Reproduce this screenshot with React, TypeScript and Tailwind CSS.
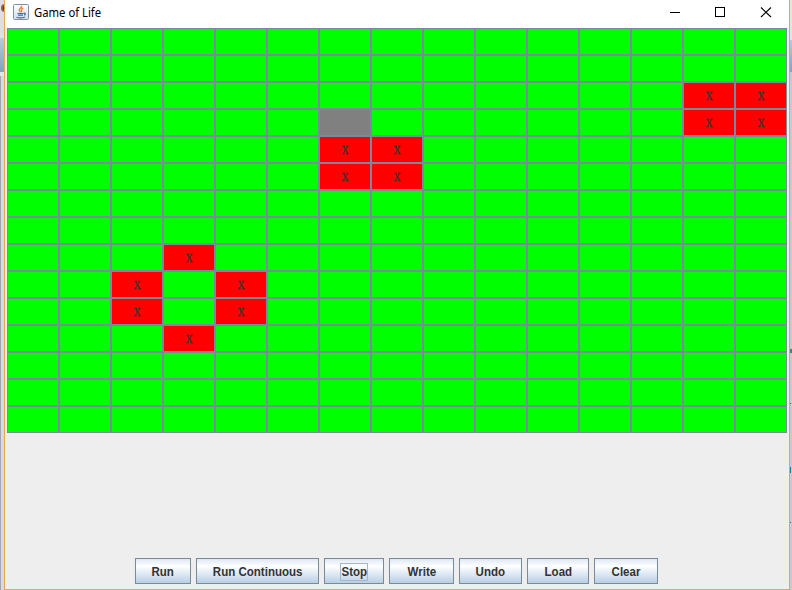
import React from "react";

const COLS = 15;
const ROWS = 15;
const live = new Set(["2-13", "2-14", "3-13", "3-14", "4-6", "4-7", "5-6", "5-7", "8-3", "9-2", "9-4", "10-2", "10-4", "11-3"]);

function Cell({ id }: { id: string }) {
  if (id === "3-6") return <div className="border border-[#7a8a99] bg-[#808080]" />;
  if (!live.has(id)) return <div className="border border-[#7a8a99] bg-[#00ff00]" />;
  return (
    <div className="flex items-center justify-center border border-[#7a8a99] bg-[#ff0000] pt-0.5 text-[11px] leading-none text-[#333333] [font-family:'DejaVu_Serif',serif]">
      <span className="scale-x-[.84] [-webkit-text-stroke:0.3px_#333333]">X</span>
    </div>
  );
}

const buttons = [
  { label: "Run", width: "w-14" },
  { label: "Run Continuous", width: "w-[123px]" },
  { label: "Stop", width: "w-[60px]", focused: true },
  { label: "Write", width: "w-[65px]" },
  { label: "Undo", width: "w-[63px]" },
  { label: "Load", width: "w-[62px]" },
  { label: "Clear", width: "w-16" },
];

function JavaIcon() {
  return (
    <svg width="16" height="16" viewBox="0 0 16 16" fill="none">
      <defs>
        <linearGradient id="tile" x1="0" y1="0" x2="0" y2="1">
          <stop stopColor="#ffffff" />
          <stop offset="1" stopColor="#d3dce5" />
        </linearGradient>
      </defs>
      <rect x=".5" y=".5" width="15" height="15" rx="1" fill="url(#tile)" stroke="#7893a8" />
      <path d="M8.800 1.800C9 4 5.800 4.200 6.200 6.200c.2.800 1 1.200 1.200 2M10.300 4.200C8.500 5 8 5.800 8.700 6.700c.4.600 0 1-.4 1.500" stroke="#ef8235" strokeWidth="1.400" />
      <path d="M4.500 9.500h6M5 11.200h5M3.500 13.300c2.500.800 6 .700 8.500-.300M10.800 9.200c2.200-.500 2 1.500.200 2" stroke="#466d8d" strokeWidth="1.200" />
    </svg>
  );
}

export default function App() {
  return (
    <div className="flex h-[590px] w-[792px] overflow-hidden bg-[#eeeeee] [font-family:'Liberation_Sans',Arial,sans-serif]">
      <div className="flex w-1 shrink-0 flex-col bg-[#dfdfe2]">
        <div className="relative h-[38px] overflow-hidden">
          <div className="absolute top-1 left-px size-2 rounded-full border-2 border-[#8c643b] bg-[#443525]" />
        </div>
        <div className="h-[34px] bg-linear-to-b from-[#b8cbdc] to-[#84a1bd]" />
        <div className="h-1 bg-[#e5e5e5]" />
        <div className="flex-1 border-l border-[#a2a4b8] bg-[#dadade]" />
      </div>
      <div className="flex w-[786px] shrink-0 flex-col border-x border-b border-[#e4a653]">
        <header className="flex h-7 shrink-0 justify-between bg-white">
          <div className="flex items-start pt-1 pl-2">
            <JavaIcon />
            <span className="pt-px pl-[5px] text-[12px] leading-4 text-black [font-family:'Noto_Sans','Open_Sans',sans-serif]">
              <span className="inline-block origin-left scale-x-[.94] whitespace-nowrap">Game of Life</span>
            </span>
          </div>
          <svg width="120" height="28" stroke="#000" fill="none" shapeRendering="crispEdges">
            <path d="M1 12.500h10M46.500 7.500h9v9h-9z" />
            <path d="m92 7.500 10 9.500m0-9.500L92 17" strokeWidth="1.100" shapeRendering="auto" />
          </svg>
        </header>
        <main className="flex flex-1 flex-col items-center justify-between pb-[5px]">
          <div className="grid grid-cols-[repeat(15,52px)] grid-rows-[repeat(15,27px)]">
            {Array.from({ length: ROWS * COLS }, (_, i) => {
              const id = `${Math.floor(i / COLS)}-${i % COLS}`;
              return <Cell key={id} id={id} />;
            })}
          </div>
          <div className="mr-0.5 flex gap-[5px]">
            {buttons.map((b) => (
              <button
                key={b.label}
                className={`${b.width} flex h-[26px] items-center justify-center border border-[#7a8a99] bg-linear-to-b from-[#dde8f3] via-white via-30% to-[#b8cfe5] px-0 pt-px pb-0 text-[12px] leading-4 font-bold text-[#333333]`}
              >
                <span className={b.focused ? "-mx-1 flex h-[18px] w-7 items-center justify-center border border-[#a3b8cc]" : ""}>
                  <span className="ml-px inline-block scale-x-[.96] whitespace-nowrap">{b.label}</span>
                </span>
              </button>
            ))}
          </div>
        </main>
      </div>
      <div className="flex w-0.5 shrink-0 flex-col bg-[#cacace]">
        <div className="h-10 bg-[#e4e4e4]" />
        <div className="h-8 bg-linear-to-b from-[#b8cbdc] to-[#84a1bd]" />
        <div className="h-[277px]" />
        <div className="h-1 bg-[#4b7c82]" />
        <div className="h-[50px]" />
        <div className="size-px bg-[#117785]" />
        <div className="h-[63px]" />
        <div className="h-1.5 w-px bg-[#177b8b]" />
        <div className="h-[49px]" />
        <div className="size-px bg-[#117785]" />
      </div>
    </div>
  );
}
